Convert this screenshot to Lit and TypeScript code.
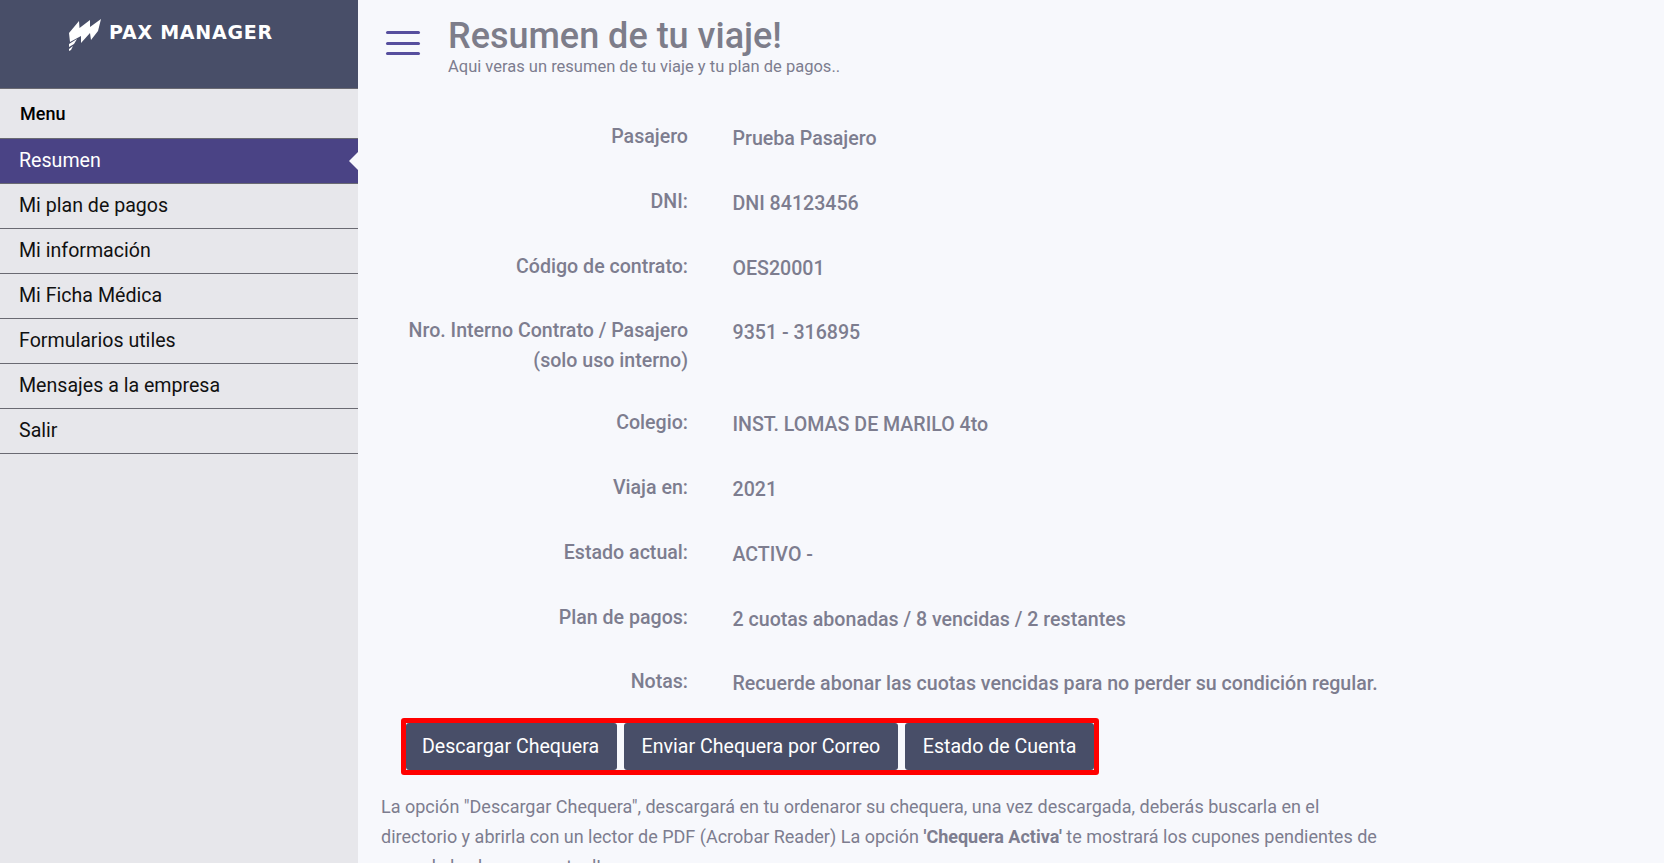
import { LitElement, html, css, svg } from "lit";
import { customElement } from "lit/decorators.js";

const MENU = ["Resumen", "Mi plan de pagos", "Mi información", "Mi Ficha Médica", "Formularios utiles", "Mensajes a la empresa", "Salir"];
const ROWS: [string[], string][] = [
  [["Pasajero"], "Prueba Pasajero"],
  [["DNI:"], "DNI 84123456"],
  [["Código de contrato:"], "OES20001"],
  [["Nro. Interno Contrato / Pasajero", "(solo uso interno)"], "9351 - 316895"],
  [["Colegio:"], "INST. LOMAS DE MARILO 4to"],
  [["Viaja en:"], "2021"],
  [["Estado actual:"], "ACTIVO -"],
  [["Plan de pagos:"], "2 cuotas abonadas / 8 vencidas / 2 restantes"],
  [["Notas:"], "Recuerde abonar las cuotas vencidas para no perder su condición regular."],
];

@customElement("app-root")
export class AppRoot extends LitElement {
  static styles = css`
    :host { display: flex; width: 1664px; height: 863px; overflow: hidden; background: #f7f8fc; font-family: Roboto, "Liberation Sans", sans-serif; color: #7d7d8f; }
    .side { width: 358px; flex: none; background: #e7e7eb; }
    .brand { height: 89px; background: #484e68; border-bottom: 1px solid #6a6a72; display: flex; align-items: flex-start; padding: 18px 0 0 68px; box-sizing: border-box; gap: 8px; }
    .brand svg { width: 33px; height: 33px; flex: none; }
    .brand span { color: #fff; font-family: "DejaVu Sans", sans-serif; font-weight: 700; font-size: 19px; letter-spacing: 0.76px; line-height: 28px; white-space: nowrap; }
    .menu-title { height: 50px; box-sizing: border-box; padding-left: 20px; display: flex; align-items: center; font-size: 18px; font-weight: 500; color: #000; border-bottom: 1px solid #6a6a72; }
    .item { height: 45px; box-sizing: border-box; padding: 0 0 2px 19px; display: flex; align-items: center; font-size: 19.6px; color: #111; border-bottom: 1px solid #6a6a72; position: relative; }
    .item.active { background: #4a4385; color: #fff; }
    .item.active::after { content: ""; position: absolute; right: 0; top: 13px; border: 9px solid transparent; border-left-width: 0; border-right: 9px solid #f7f8fc; }
    .main { flex: 1; min-width: 0; padding: 0 0 0 22px; }
    .top { display: flex; height: 109px; }
    .burger { width: 34px; height: 24px; margin: 31px 28px 0 6px; display: flex; flex-direction: column; justify-content: space-between; flex: none; }
    .burger i { display: block; height: 3px; background: #574f9e; border-radius: 2px; }
    h1 { margin: 14px 0 0; font-size: 36px; line-height: 44px; font-weight: 500; color: #7d7d8a; }
    .sub { font-size: 16.5px; line-height: 19px; color: #7d7d8f; margin-top: -1px; }
    .rows { display: flex; flex-direction: column; }
    .row { display: grid; grid-template-columns: 301px 1fr; column-gap: 44.5px; padding: 15px 0 20.35px 0; margin-left: 7px; font-size: 19.6px; font-weight: 500; line-height: 29.4px; }
    .lab { text-align: right; margin-top: -2px; }
    .lab div { white-space: nowrap; }
    .btns { display: inline-flex; margin: -1px 0 0 21px; border: 5px solid #f00; border-radius: 3px; background: #f7f8fc; gap: 6.5px; }
    .btn { height: 47px; display: flex; align-items: center; padding: 0 18px; background: #484e68; color: #fff; font-size: 19.6px; border-radius: 3px; }
    .btn:first-child { padding-left: 16px; }
    .note { margin: 17px 0 0 1px; font-size: 18px; line-height: 30px; color: #7d7d8f; width: 1005px; }
    .note b { font-weight: 700; }
  `;

  render() {
    return html`
      <aside class="side">
        <div class="brand">
          <svg viewBox="0 0 33 33" aria-hidden="true">${svg`<path fill="#fff" d="M1 15 L11 3 L11.5 10 L22 2 L22 9 L33 1 L30 13 L23 22 L22 15 L13 25 L13 18 L2 24 Z M1 26 L9 21 L6 26 L1 29 Z M1 31 L5 28 L3 32 L1 33 Z"/>`}</svg>
          <span>PAX MANAGER</span>
        </div>
        <div class="menu-title">Menu</div>
        ${MENU.map((m, i) => html`<div class="item ${i === 0 ? "active" : ""}">${m}</div>`)}
      </aside>
      <main class="main">
        <div class="top">
          <div class="burger"><i></i><i></i><i></i></div>
          <div>
            <h1>Resumen de tu viaje!</h1>
            <div class="sub">Aqui veras un resumen de tu viaje y tu plan de pagos..</div>
          </div>
        </div>
        <div class="rows">
          ${ROWS.map(([l, v]) => html`<div class="row"><div class="lab">${l.map((x) => html`<div>${x}</div>`)}</div><div>${v}</div></div>`)}
        </div>
        <div class="btns">
          <div class="btn">Descargar Chequera</div>
          <div class="btn">Enviar Chequera por Correo</div>
          <div class="btn">Estado de Cuenta</div>
        </div>
        <p class="note">La opción "Descargar Chequera", descargará en tu ordenaror su chequera, una vez descargada, deberás buscarla en el directorio y abrirla con un lector de PDF (Acrobar Reader) La opción <b>'Chequera Activa'</b> te mostrará los cupones pendientes de pago de la chequera actual!</p>
      </main>
    `;
  }
}
